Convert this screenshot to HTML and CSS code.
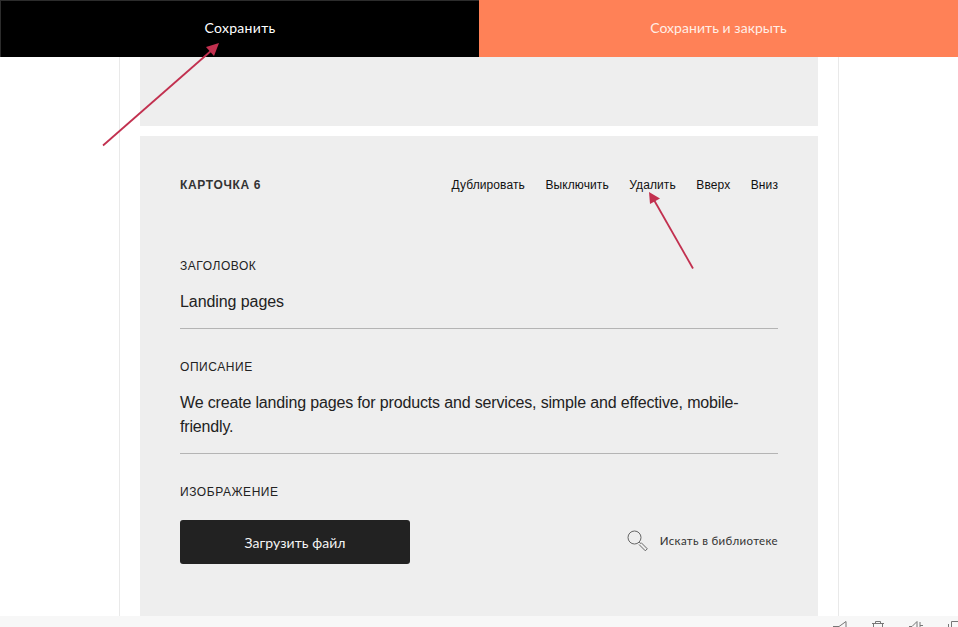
FILE: index.html
```html
<!DOCTYPE html>
<html lang="ru">
<head>
<meta charset="utf-8">
<title>Карточка 6</title>
<link rel="stylesheet" href="styles.css">
</head>
<body>
<header class="topbar">
  <button class="topbtn topbtn-save">Сохранить</button>
  <button class="topbtn topbtn-close">Сохранить и закрыть</button>
</header>
<main class="column">
  <div class="panel panel-prev"></div>
  <section class="panel card">
    <div class="card-head">
      <h2 class="card-title">КАРТОЧКА 6</h2>
      <nav class="card-actions">
        <a>Дублировать</a><a>Выключить</a><a>Удалить</a><a>Вверх</a><a>Вниз</a>
      </nav>
    </div>
    <div class="field field-title">
      <div class="label">ЗАГОЛОВОК</div>
      <div class="value value-title">Landing pages</div>
    </div>
    <div class="field field-desc">
      <div class="label">ОПИСАНИЕ</div>
      <div class="value value-desc">We create landing pages for products and services, simple and effective, mobile-friendly.</div>
    </div>
    <div class="field-image">
      <div class="label">ИЗОБРАЖЕНИЕ</div>
      <div class="image-row">
        <button class="upload">Загрузить файл</button>
        <a class="library">
          <svg class="library-icon" width="21" height="21" viewBox="0 0 21 21" fill="none" stroke="#666" stroke-width="1">
            <circle cx="7.500" cy="7.500" r="6.500"/>
            <path d="M12.200 12.200l1.500 1.500M14 12.500l6.300 6.300-2 2-6.300-6.300"/>
          </svg>
          <span>Искать в библиотеке</span>
        </a>
      </div>
    </div>
  </section>
</main>
<footer class="statusbar">
  <svg class="status-icon" width="14" height="11" viewBox="0 0 14 11" fill="none" stroke="#777"><path d="M0 5.500h6l7-5v10"/></svg>
  <svg class="status-icon" width="12" height="11" viewBox="0 0 12 11" fill="none" stroke="#777"><path d="M0 2.500h12M3.500 2.500V.5h5v2M1.500 2.500V11M10.500 2.500V11"/></svg>
  <svg class="status-icon" width="14" height="11" viewBox="0 0 14 11" fill="none" stroke="#777"><path d="M0 5.500h3l5-5V11M11 1v10M11 4.500h3"/></svg>
  <svg class="status-icon" width="10" height="11" viewBox="0 0 10 11" fill="none" stroke="#777"><path d="M.5 3v8M3.500 .5H10M3.500 .5V11"/></svg>
</footer>
<svg class="arrows" width="958" height="627" viewBox="0 0 958 627" fill="none">
  <path d="M103 145.500L212 50" stroke="#c2304f" stroke-width="1.800"/>
  <path d="M219 43L214 56L206 47Z" fill="#c2304f"/>
  <path d="M693 268.500L654 200" stroke="#c2304f" stroke-width="1.800"/>
  <path d="M649 192L660 198.500L650 204Z" fill="#c2304f"/>
</svg>
</body>
</html>
```

FILE: styles.css
```css
* { box-sizing: border-box; }
html, body { margin: 0; height: 100%; overflow: hidden; background: #fff; }
body { position: relative; font-family: "Liberation Sans", Arial, sans-serif; color: #111; }

.topbar { position: absolute; top: 0; left: 0; right: 0; height: 57px; display: flex; z-index: 2; }
.topbtn {
  flex: 1 1 50%; border: 0; padding: 0 0 3px; margin: 0;
  font-family: Lato, sans-serif; font-size: 14px; font-weight: 400; letter-spacing: 0.3px; color: #fff;
}
.topbtn-save { background: #000; border-top: 1px solid #2c2c2c; border-left: 1px solid #2c2c2c; }
.topbtn-close { background: #ff8157; color: #ffeee6; letter-spacing: 0.05px; }

.column {
  width: 720px; height: 616px; margin-left: 119px; padding: 57px 20px 0;
  border-left: 1px solid #e9e9e9; border-right: 1px solid #e9e9e9;
  display: flex; flex-direction: column; gap: 10px; overflow: hidden;
}
.panel { background: #eeeeee; width: 678px; flex: none; }
.panel-prev { height: 69px; }
.card { height: 480px; padding: 40px 40px 0; }

.card-head { display: flex; justify-content: space-between; align-items: center; height: 18px; }
.card-title { margin: 0; font-size: 12px; font-weight: 700; letter-spacing: 0.65px; color: #333; }
.card-actions { display: flex; gap: 20.5px; font-size: 12px; letter-spacing: 0.1px; color: #111; }

.label { font-size: 12px; line-height: 14px; letter-spacing: 0.55px; color: #222; }
.value { font-size: 16px; line-height: 24px; color: #222; }
.value-title { letter-spacing: -0.08px; }
.value-desc { letter-spacing: -0.16px; }
.field { border-bottom: 1px solid #b4b4b4; }
.field-title { margin-top: 65px; height: 70px; }
.field-title .label { margin-bottom: 17px; }
.field-desc { margin-top: 31px; height: 94px; }
.field-desc .label { margin-bottom: 17px; }
.field-image { margin-top: 31px; }

.image-row { display: flex; justify-content: space-between; align-items: center; margin-top: 21px; }
.upload {
  width: 230px; height: 44px; border: 0; border-radius: 3px; background: #222; color: #f4f4f4;
  font-family: Lato, sans-serif; font-size: 14px; font-weight: 400; letter-spacing: 0.05px;
}
.library { display: flex; align-items: center; gap: 12px; font-family: Lato, sans-serif; font-size: 11.5px; font-weight: 400; letter-spacing: 0.35px; color: #333; margin-top: -3px; }
.library-icon { display: block; }

.statusbar {
  position: absolute; left: 0; right: 0; top: 616px; height: 11px; background: #f7f7f7;
  display: flex; align-items: flex-start; justify-content: flex-end; gap: 25px; padding: 5px 0 0; overflow: hidden;
}
.status-icon { flex: none; }

.arrows { position: absolute; top: 0; left: 0; z-index: 3; pointer-events: none; }
```
